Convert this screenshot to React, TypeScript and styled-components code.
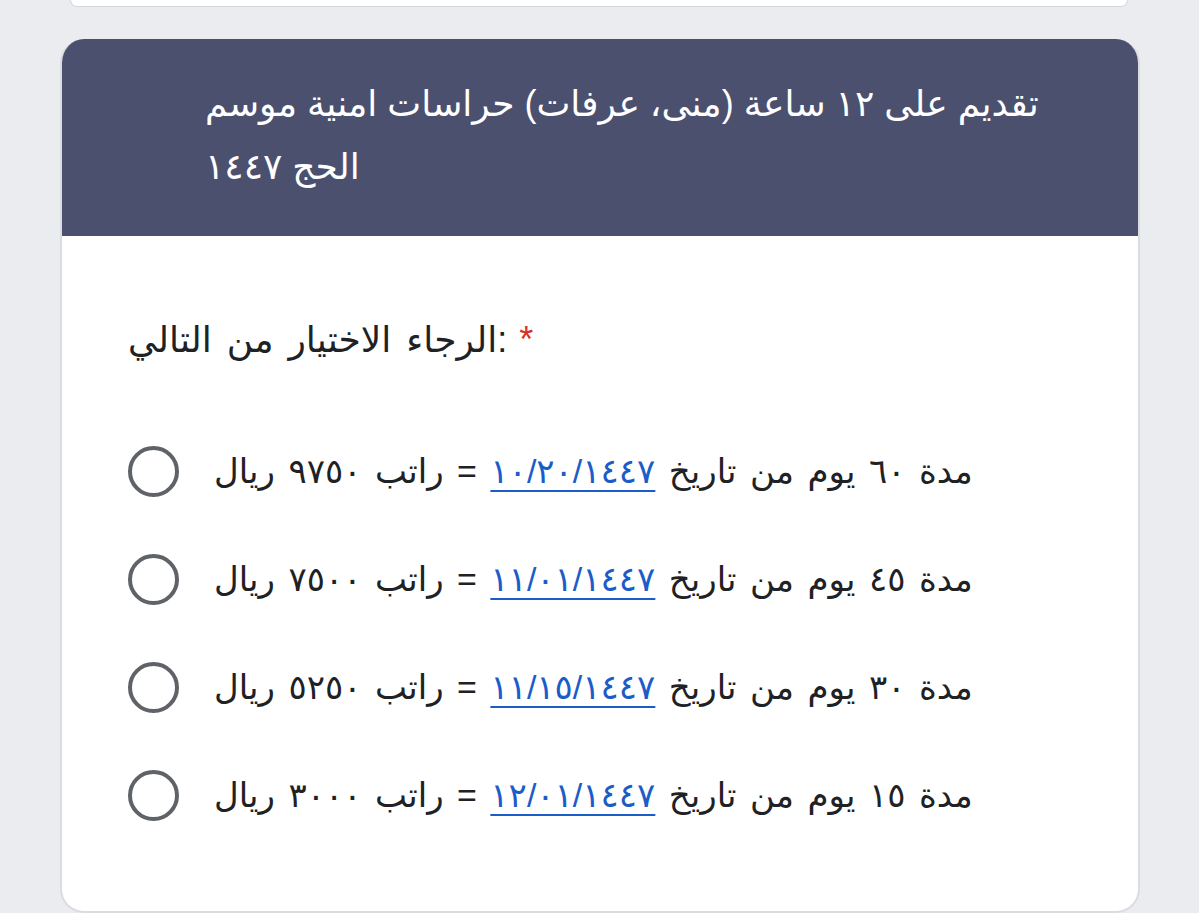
import styled, { createGlobalStyle } from "styled-components";

const GlobalStyle = createGlobalStyle`
  html, body {
    margin: 0;
    padding: 0;
    background: #ebecf0;
  }
  body {
    font-family: "Liberation Sans", "DejaVu Sans", sans-serif;
    color: #202124;
  }
`;

const Page = styled.div`
  width: 1199px;
  height: 913px;
  overflow: hidden;
`;

const PrevCard = styled.div`
  margin: 0 71px 0 70px;
  height: 6px;
  background: #ffffff;
  border: 1px solid #d6d7db;
  border-top: none;
  border-radius: 0 0 12px 12px;
`;

const Card = styled.section`
  margin: 32px 59px 0 60px;
  border-radius: 24px;
  overflow: hidden;
  background: #ffffff;
  border: 2px solid #dadce0;
  border-top: none;
  height: 874px;
  box-sizing: border-box;
`;

const Header = styled.header`
  background: #4b506e;
  height: 197px;
  box-sizing: border-box;
  padding: 33px 100px 0 145px;
  margin: 0 -2px;
`;

const Title = styled.h1`
  margin: 0;
  font-weight: 400;
  font-size: 36px;
  line-height: 63px;
  color: #ffffff;
`;

const Body = styled.div`
  padding: 79px 64px 0 66px;
`;

const Question = styled.div`
  font-size: 36px;
  line-height: 50px;
  word-spacing: 5px;
  color: #202124;
  margin-bottom: 52px;
`;

const Required = styled.span`
  color: #d93025;
  margin-left: 12px;
`;

const Options = styled.div`
  display: flex;
  flex-direction: column;
`;

const Option = styled.label`
  display: flex;
  align-items: center;
  gap: 35px;
  height: 108px;
  cursor: pointer;
`;

const Radio = styled.span`
  width: 51px;
  height: 51px;
  box-sizing: border-box;
  border: 4px solid #5f6368;
  border-radius: 50%;
  flex-shrink: 0;
`;

const OptionText = styled.span`
  font-size: 34px;
  line-height: 44px;
  word-spacing: 4px;
  color: #202124;
`;

const DateLink = styled.a`
  color: #1a5cc8;
  text-decoration: underline;
  text-decoration-thickness: 2px;
  text-underline-offset: 7px;
`;

const options = [
  { days: "٦٠", date: "١٠/٢٠/١٤٤٧", pay: "٩٧٥٠" },
  { days: "٤٥", date: "١١/٠١/١٤٤٧", pay: "٧٥٠٠" },
  { days: "٣٠", date: "١١/١٥/١٤٤٧", pay: "٥٢٥٠" },
  { days: "١٥", date: "١٢/٠١/١٤٤٧", pay: "٣٠٠٠" },
];

export default function App() {
  return (
    <Page>
      <GlobalStyle />
      <PrevCard />
      <Card>
        <Header>
          <Title>تقديم على ١٢ ساعة (منى، عرفات) حراسات امنية موسم الحج ١٤٤٧</Title>
        </Header>
        <Body>
          <Question>
            الرجاء الاختيار من التالي:
            <Required>*</Required>
          </Question>
          <Options>
            {options.map((o) => (
              <Option key={o.date}>
                <Radio />
                <OptionText>
                  مدة {o.days} يوم من تاريخ <DateLink href="#">{o.date}</DateLink> = راتب {o.pay} ريال
                </OptionText>
              </Option>
            ))}
          </Options>
        </Body>
      </Card>
    </Page>
  );
}
